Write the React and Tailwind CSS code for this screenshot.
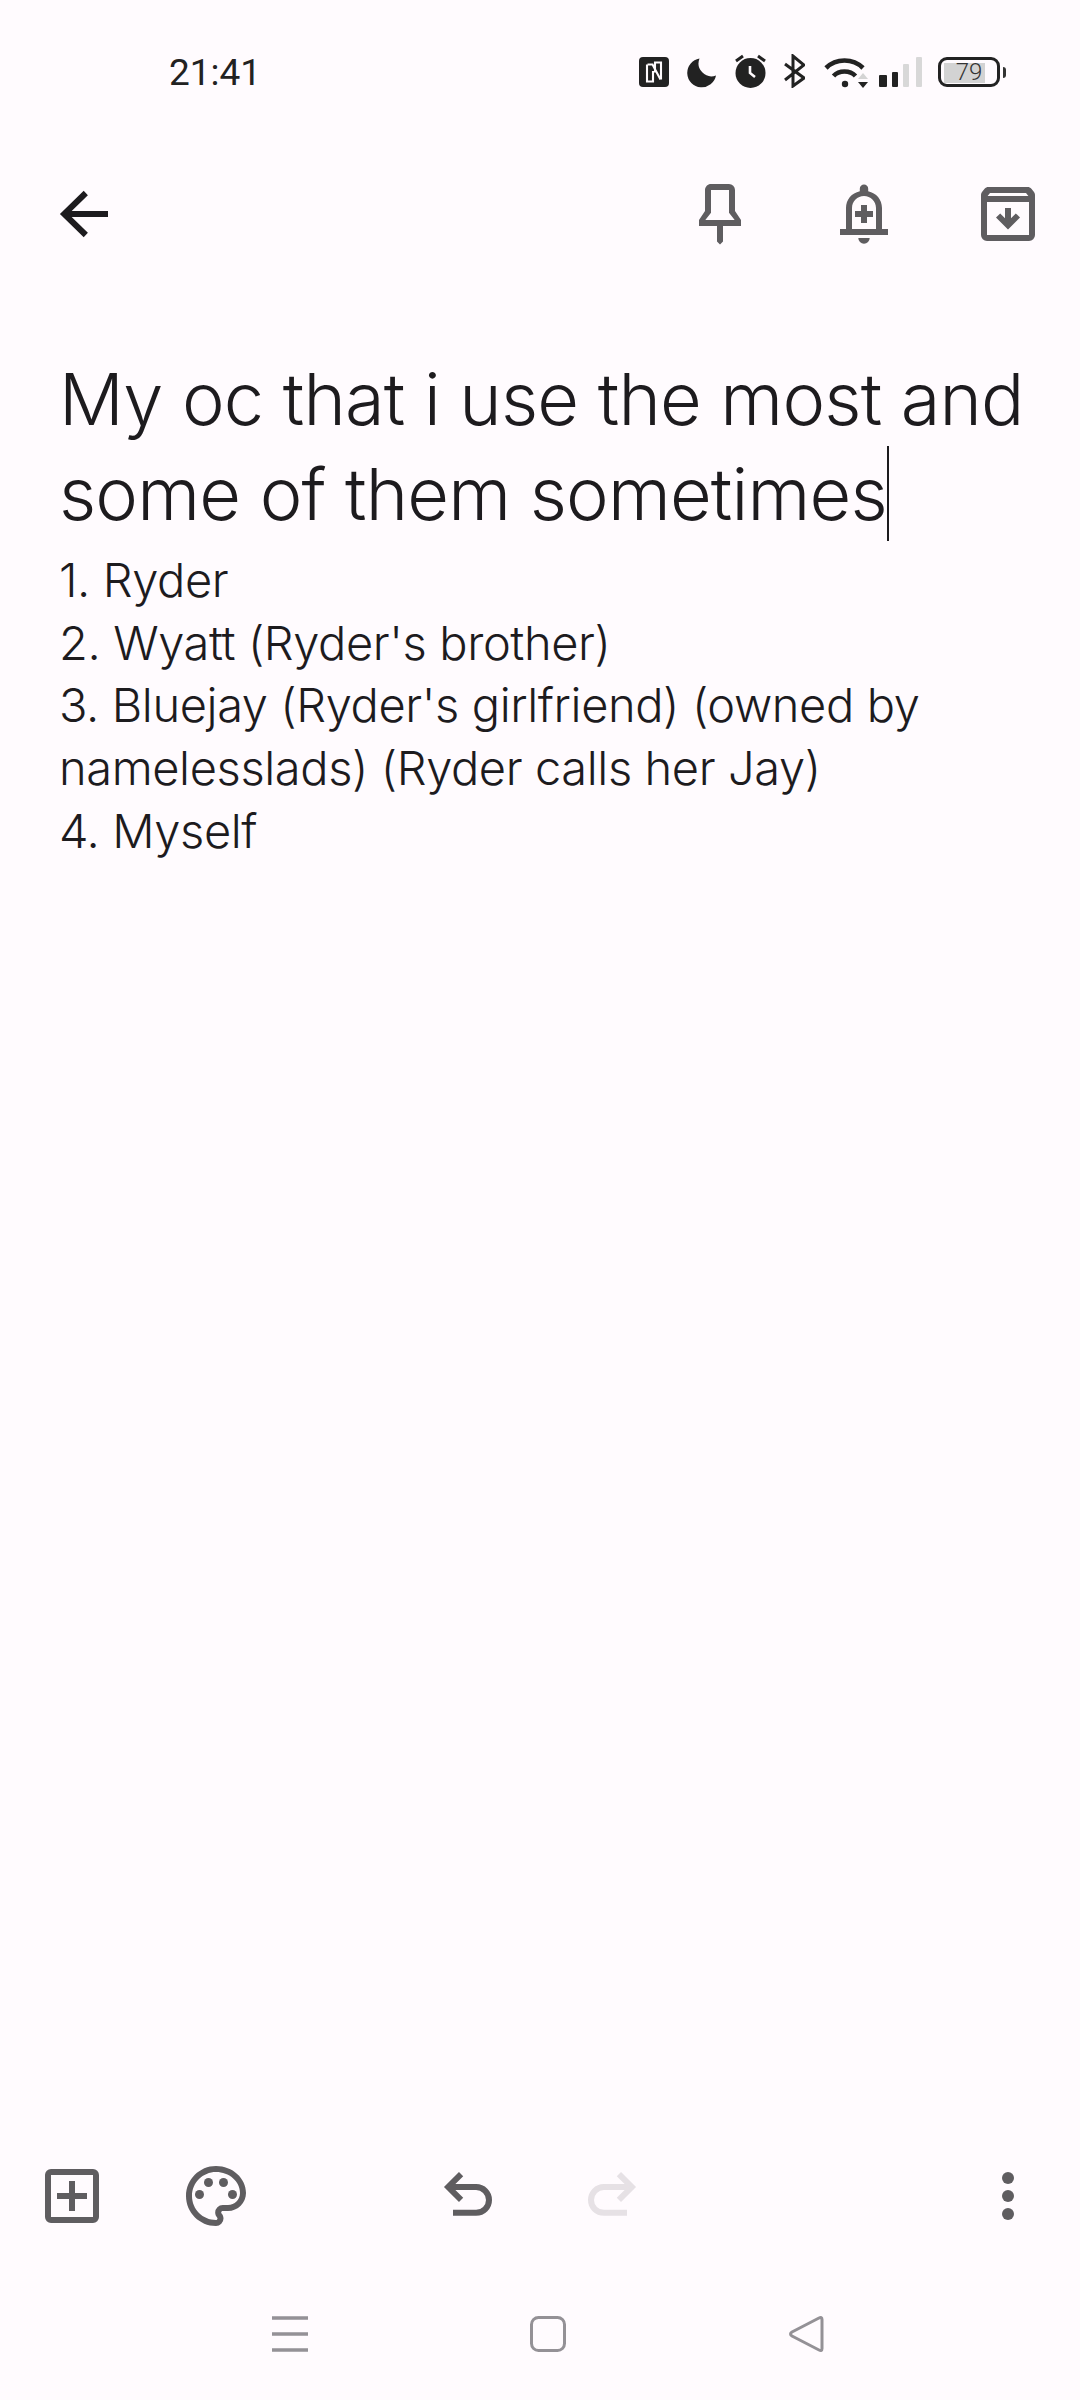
const D = "#1d1b1e";
const G = "#5f5d60";
const Icon = ({ children, color = G }) => (
  <svg width="72" height="72" viewBox="0 0 24 24" fill={color} className="shrink-0">{children}</svg>
);
const Stroke = ({ d, color = G, w = 2 }) => <path d={d} fill="none" stroke={color} strokeWidth={w} />;

function StatusIcons() {
  const ic = "#222222";
  return (
    <div className="flex items-start">
      <svg width="30" height="34" viewBox="0 0 30 34">
        <rect x="0" y="3" width="30" height="30" rx="4" fill={ic} />
        <path d="M8 10.500V27.500h6V17M8.500 10.500H13.500L21.500 25.500M22 25.500V8.500h-6v10" fill="none" stroke="#fffbfe" strokeWidth="2.100" />
      </svg>
      <svg width="29" height="34" viewBox="0 0 29 34" className="ml-[18px]">
        <path d="M12.500 4.500A14.500 14.500 0 1 0 29 21.500 A13 13 0 0 1 12.500 4.500z" fill={ic} />
      </svg>
      <svg width="31" height="34" viewBox="0 0 31 34" className="ml-[19px]">
        <circle cx="15.500" cy="19" r="15" fill={ic} />
        <path d="M1 7L8 2M30 7L23 2" stroke={ic} strokeWidth="3" fill="none" />
        <path d="M15 12v7l5 4" stroke="#fffbfe" strokeWidth="2.600" fill="none" />
      </svg>
      <svg width="21" height="34" viewBox="0 0 21 34" className="ml-[18px]">
        <path d="M1 10L20 24L9 32V2L20 11L1 26" stroke={ic} strokeWidth="3" fill="none" />
      </svg>
      <svg width="44" height="34" viewBox="0 0 44 34" className="ml-[19px]">
        <path d="M2 14C12 4 29 4 39 14" stroke={ic} strokeWidth="4.600" fill="none" />
        <path d="M9.500 22C15 16 26 16 31.500 22" stroke={ic} strokeWidth="4.600" fill="none" />
        <circle cx="21" cy="30" r="3.200" fill={ic} />
        <path d="M34 25L39 19L44 25z" fill="#d4d4d4" />
        <path d="M34 28H44L39 34z" fill={ic} />
      </svg>
      <svg width="43" height="34" viewBox="0 0 43 34" className="ml-[11px]">
        <rect x="0" y="21" width="8" height="12" rx="1" fill={ic} />
        <rect x="13" y="18" width="6" height="15" rx="1" fill={ic} />
        <rect x="24" y="10" width="6" height="23" rx="1" fill="#d8d8d8" />
        <rect x="37" y="3" width="6" height="30" rx="1" fill="#d8d8d8" />
      </svg>
      <div className="relative ml-[16px] mt-[3px] h-[30px] w-[68px]">
        <div className="h-[30px] w-[62px] rounded-[9px] border-[3px] border-[#222222]" />
        <div className="absolute left-[6px] top-[6px] h-[20px] w-[41px] bg-[#d3d3d3]" />
        <div className="absolute right-[0px] top-[10px] h-[11px] w-[3px] rounded-r-sm bg-[#333333]" />
        <div className="absolute left-0 top-0 flex h-[30px] w-[62px] items-center justify-center text-[24px] font-light leading-none text-[#333333] [font-family:Roboto,sans-serif]">79</div>
      </div>
    </div>
  );
}

export default function App() {
  return (
    <div className="flex h-[2400px] w-[1080px] flex-col bg-[#fffbfe] [font-family:Inter,sans-serif]">
      <div className="flex items-start justify-between pl-[169px] pr-[74px] pt-[54px]">
        <span className="text-[37px] leading-[38px] text-[#222222] [font-family:Roboto,sans-serif]">21:41</span>
        <StatusIcons />
      </div>

      <div className="mt-[86px] flex items-center justify-between pl-[48px] pr-[36px]">
        <Icon color={D}>
          <Stroke color={D} d="M20 12H6M12.600 5L5.400 12l7.200 7" />
        </Icon>
        <div className="flex gap-[72px]">
          <Icon>
            <path fillRule="evenodd" d="M17 4a2 2 0 0 0-2-2H9c-1.100 0-2 .9-2 2v7l-2 3v2h6v5.200l1 1 1-1V16h6v-2l-2-3V4zM15 11.600L16.900 14H7.100L9 11.600V4h6v7.600z" />
          </Icon>
          <Icon>
            <path fillRule="evenodd" d="M6 17v-7c0-2.900 1.900-5 4.600-5.600V3.600a1.400 1.400 0 0 1 2.800 0v.8C16.100 5 18 7.100 18 10v7zM8 17h8v-7c0-2.200-1.800-4-4-4s-4 1.800-4 4z" />
            <path d="M4 17h16v2H4zM10.100 20h3.800a1.900 1.900 0 0 1-3.800 0zM11 9h2v2h2v2h-2v2h-2v-2H9v-2h2z" />
          </Icon>
          <Icon>
            <path fillRule="evenodd" d="M5.500 3h13c.5 0 1 .2 1.300.6l.6.7c.4.4.6.9.6 1.400V19a2 2 0 0 1-2 2H5a2 2 0 0 1-2-2V5.700c0-.5.2-1 .6-1.400l.6-.7C4.500 3.200 5 3 5.500 3zM5 8v11h14V8zM6 5L5.200 6h13.600L18 5z" />
            <path d="M11 10h2v3.400l1.600-1.600 1.400 1.400-4 4-4-4 1.400-1.400 1.600 1.600z" />
          </Icon>
        </div>
      </div>

      <div className="flex-1 pl-[59px] pr-[40px] pt-[101px] text-[#1d1b1e]">
        <div className="text-[72px] font-light leading-[95px] tracking-[-0.8px]">
          My oc that i use the most and some of them sometimes<span className="inline-block h-[95px] w-[2px] bg-[#1d1b1e] align-top" />
        </div>
        <div className="mt-[8px] w-[960px] text-[47px] font-light leading-[62.7px] tracking-[-0.4px]">
          <div>1. Ryder</div>
          <div>2. Wyatt (Ryder's brother)</div>
          <div>3. Bluejay (Ryder's girlfriend) (owned by namelesslads) (Ryder calls her Jay)</div>
          <div>4. Myself</div>
        </div>
      </div>

      <div className="flex items-center pl-[36px] pr-[36px]">
        <div className="flex gap-[72px]">
          <Icon>
            <rect x="4" y="4" width="16" height="16" rx="1" fill="none" stroke={G} strokeWidth="2" />
            <path d="M11 7h2v4h4v2h-4v4h-2v-4H7v-2h4z" />
          </Icon>
          <Icon>
            <path fillRule="evenodd" d="M12 22C6.490 22 2 17.510 2 12S6.490 2 12 2s10 4.040 10 9c0 3.310-2.690 6-6 6h-1.770c-.28 0-.5.22-.5.5 0 .12.05.23.13.33.41.47.64 1.060.64 1.670A2.500 2.500 0 0 1 12 22zm0-18c-4.410 0-8 3.590-8 8s3.590 8 8 8c.28 0 .5-.22.5-.5a.54.54 0 0 0-.14-.35c-.41-.46-.63-1.050-.63-1.650a2.500 2.500 0 0 1 2.500-2.500H16c2.210 0 4-1.790 4-4 0-3.860-3.590-7-8-7z" />
            <circle cx="6.500" cy="11.500" r="1.500" />
            <circle cx="9.500" cy="7.500" r="1.500" />
            <circle cx="14.500" cy="7.500" r="1.500" />
            <circle cx="17.500" cy="11.500" r="1.500" />
          </Icon>
        </div>
        <div className="ml-[180px] flex gap-[72px]">
          <Icon>
            <Stroke d="M7 17.600H14.700a4.300 4.300 0 0 0 0-8.600H5.500M9.700 4.700L5.400 9l4.300 4.300" />
          </Icon>
          <Icon color="#e6e1e5">
            <g transform="translate(24 0) scale(-1 1)">
              <Stroke color="#e6e1e5" d="M7 17.600H14.700a4.300 4.300 0 0 0 0-8.600H5.500M9.700 4.700L5.400 9l4.300 4.300" />
            </g>
          </Icon>
        </div>
        <div className="ml-auto">
          <Icon>
            <circle cx="12" cy="6" r="2" />
            <circle cx="12" cy="12" r="2" />
            <circle cx="12" cy="18" r="2" />
          </Icon>
        </div>
      </div>

      <div className="mb-[48px] mt-[84px] flex h-[36px] items-center pl-[272px]">
        <svg width="36" height="36" viewBox="0 0 36 36">
          <path d="M0 2H36M0 18H36M0 34H36" stroke="#949196" strokeWidth="3.500" fill="none" />
        </svg>
        <svg width="36" height="36" viewBox="0 0 36 36" className="ml-[222px]">
          <rect x="1.500" y="1.500" width="33" height="33" rx="7" stroke="#949196" strokeWidth="3" fill="none" />
        </svg>
        <svg width="35" height="36" viewBox="0 0 35 36" className="ml-[223px]">
          <path d="M33 3.500L33 32.500Q33 35.500 30 34L3 20Q0 18 3 16L30 2Q33 .5 33 3.500z" stroke="#949196" strokeWidth="3" fill="none" />
        </svg>
      </div>
    </div>
  );
}
